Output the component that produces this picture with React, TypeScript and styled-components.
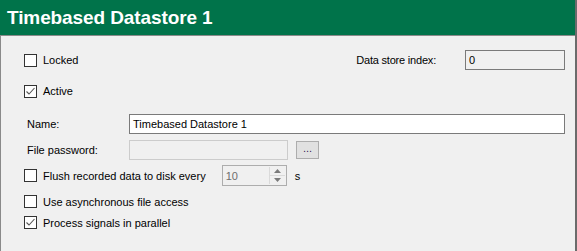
import React from "react";
import styled, { createGlobalStyle } from "styled-components";

const GlobalStyle = createGlobalStyle`
    html, body {
        margin: 0;
        padding: 0;
        background: #f0f0f0;
    }
    body {
        font-family: "Liberation Sans", Arial, sans-serif;
        font-size: 11px;
        color: #000;
    }
`;

const Window = styled.div`
    display: flex;
    width: 577px;
    height: 251px;
    overflow: hidden;
`;

const Pane = styled.div`
    display: flex;
    flex-direction: column;
    flex: 1 0 0;
    min-width: 0;
`;

const Splitter = styled.div`
    width: 2px;
    background: #6b6b6b;
`;

const Header = styled.div`
    height: 35px;
    display: flex;
    align-items: center;
    padding-left: 7px;
    background: #00734a;
    color: #fff;
    font-size: 19px;
    font-weight: bold;
    letter-spacing: -0.1px;
    border-bottom: 1px solid #8a8a8a;
`;

const Body = styled.div`
    flex: 1;
    display: flex;
    flex-direction: column;
    padding: 14px 10px 0 23px;
    border-left: 1px solid #8a8a8a;
`;

const Row = styled.div<{ $mt?: number; $h?: number }>`
    display: flex;
    align-items: center;
    height: ${({ $h }) => $h ?? 20}px;
    margin-top: ${({ $mt }) => $mt ?? 0}px;
`;

const CheckLabel = styled.label`
    display: flex;
    align-items: center;
    gap: 6px;
    cursor: default;
`;

const Box = styled.span`
    display: inline-flex;
    align-items: center;
    justify-content: center;
    width: 13px;
    height: 13px;
    box-sizing: border-box;
    border: 1px solid #333;
    background: #fff;
`;

const FieldLabel = styled.span<{ $w?: number }>`
    width: ${({ $w }) => $w ?? 102}px;
    padding-left: 3px;
    flex-shrink: 0;
`;

const TextBox = styled.div<{ $w?: number; $disabled?: boolean; $readOnly?: boolean }>`
    box-sizing: border-box;
    height: 20px;
    width: ${({ $w }) => ($w ? `${$w}px` : "auto")};
    flex: ${({ $w }) => ($w ? "0 0 auto" : "1")};
    display: flex;
    align-items: center;
    padding-left: 3px;
    border: 1px solid ${({ $disabled }) => ($disabled ? "#cccccc" : "#7a7a7a")};
    background: ${({ $disabled, $readOnly }) => ($disabled || $readOnly ? "#f0f0f0" : "#fff")};
    color: ${({ $disabled }) => ($disabled ? "#6d6d6d" : "#000")};
`;

const Spacer = styled.div`
    flex: 1;
`;

const IndexLabel = styled.span`
    margin-right: 29px;
    letter-spacing: -0.2px;
`;

const EllipsisButton = styled.div`
    box-sizing: border-box;
    width: 23px;
    height: 18px;
    margin-left: 8px;
    display: flex;
    align-items: center;
    justify-content: center;
    padding-bottom: 4px;
    background: #e1e1e1;
    border: 1px solid #adadad;
    color: #3a1a5a;
`;

const Spinner = styled.div`
    box-sizing: border-box;
    margin-left: 16px;
    width: 65px;
    height: 21px;
    display: flex;
    align-items: center;
    padding-left: 3px;
    border: 1px solid #adadad;
    background: #f0f0f0;
    color: #6d6d6d;
`;

const SpinButtons = styled.div`
    margin-left: auto;
    width: 15px;
    height: 17px;
    margin-right: 1px;
    display: flex;
    flex-direction: column;
    border-left: 1px solid #dadada;
`;

const SpinHalf = styled.div`
    flex: 1;
    display: flex;
    align-items: center;
    justify-content: center;
    & + & {
        border-top: 1px solid #dadada;
    }
`;

const Unit = styled.span`
    margin-left: 8px;
`;

const Check = ({ checked }: { checked?: boolean }) => (
    <Box>
        {checked && (
            <svg width="11" height="11" viewBox="0 0 11 11">
                <polyline points="1.5,5.5 4,8 9.5,2" fill="none" stroke="#555" strokeWidth="1.1" />
            </svg>
        )}
    </Box>
);

const Checkbox = ({ label, checked }: { label: string; checked?: boolean }) => (
    <CheckLabel>
        <Check checked={checked} />
        {label}
    </CheckLabel>
);

const Arrow = ({ up }: { up?: boolean }) => (
    <svg width="7" height="4" viewBox="0 0 7 4">
        <polygon points={up ? "0,4 7,4 3.5,0" : "0,0 7,0 3.5,4"} fill="#7a7a7a" />
    </svg>
);

export default function App() {
    return (
        <>
            <GlobalStyle />
            <Window>
                <Pane>
                    <Header>Timebased Datastore 1</Header>
                    <Body>
                        <Row>
                            <Checkbox label="Locked" />
                            <Spacer />
                            <IndexLabel>Data store index:</IndexLabel>
                            <TextBox $w={100} $readOnly>
                                0
                            </TextBox>
                        </Row>
                        <Row $mt={11}>
                            <Checkbox label="Active" checked />
                        </Row>
                        <Row $mt={13}>
                            <FieldLabel>Name:</FieldLabel>
                            <TextBox>Timebased Datastore 1</TextBox>
                        </Row>
                        <Row $mt={6}>
                            <FieldLabel>File password:</FieldLabel>
                            <TextBox $w={159} $disabled />
                            <EllipsisButton>...</EllipsisButton>
                        </Row>
                        <Row $mt={5} $h={21}>
                            <Checkbox label="Flush recorded data to disk every" />
                            <Spinner>
                                10
                                <SpinButtons>
                                    <SpinHalf>
                                        <Arrow up />
                                    </SpinHalf>
                                    <SpinHalf>
                                        <Arrow />
                                    </SpinHalf>
                                </SpinButtons>
                            </Spinner>
                            <Unit>s</Unit>
                        </Row>
                        <Row $mt={5} $h={21}>
                            <Checkbox label="Use asynchronous file access" />
                        </Row>
                        <Row $h={21}>
                            <Checkbox label="Process signals in parallel" checked />
                        </Row>
                    </Body>
                </Pane>
                <Splitter />
            </Window>
        </>
    );
}
